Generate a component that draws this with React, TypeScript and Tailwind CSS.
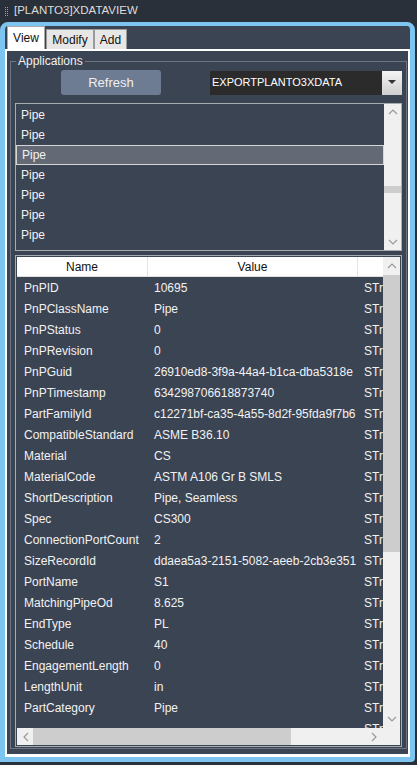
import React from "react";

const rows: [string, string][] = [
  ["PnPID", "10695"],
  ["PnPClassName", "Pipe"],
  ["PnPStatus", "0"],
  ["PnPRevision", "0"],
  ["PnPGuid", "26910ed8-3f9a-44a4-b1ca-dba5318e"],
  ["PnPTimestamp", "634298706618873740"],
  ["PartFamilyId", "c12271bf-ca35-4a55-8d2f-95fda9f7b6"],
  ["CompatibleStandard", "ASME B36.10"],
  ["Material", "CS"],
  ["MaterialCode", "ASTM A106 Gr B SMLS"],
  ["ShortDescription", "Pipe, Seamless"],
  ["Spec", "CS300"],
  ["ConnectionPortCount", "2"],
  ["SizeRecordId", "ddaea5a3-2151-5082-aeeb-2cb3e351"],
  ["PortName", "S1"],
  ["MatchingPipeOd", "8.625"],
  ["EndType", "PL"],
  ["Schedule", "40"],
  ["EngagementLength", "0"],
  ["LengthUnit", "in"],
  ["PartCategory", "Pipe"],
  ["", ""],
];

const Chevron = ({ dir }: { dir: "up" | "down" | "left" | "right" }) => {
  const pts = {
    up: "1,6 5,2 9,6",
    down: "1,2 5,6 9,2",
    left: "6,1 2,5 6,9",
    right: "2,1 6,5 2,9",
  }[dir];
  const vert = dir === "up" || dir === "down";
  return (
    <svg
      width={vert ? 10 : 8}
      height={vert ? 8 : 10}
      viewBox={vert ? "0 0 10 8" : "0 0 8 10"}
    >
      <polyline points={pts} fill="none" stroke="#9a9a9a" strokeWidth="1.2" />
    </svg>
  );
};

export default function App() {
  return (
    <div
      className="w-[417px] h-[765px] bg-[#2a303a] flex flex-col overflow-hidden text-[11px] text-[#f2f2f2]"
      style={{ fontFamily: '"Liberation Sans", Arial, sans-serif' }}
    >
      {/* title bar */}
      <div className="h-[22px] flex items-center pl-[5px] gap-[6px] shrink-0">
        <div className="grid grid-cols-2 gap-x-[1px] gap-y-[1px]">
          {Array.from({ length: 10 }).map((_, i) => (
            <div key={i} className="w-[1px] h-[1px] bg-[#9aa0a8]" />
          ))}
        </div>
        <span className="text-[11.5px] text-[#dcdcdc]">[PLANTO3]XDATAVIEW</span>
      </div>

      {/* blue frame */}
      <div className="w-[415px] h-[740px] shrink-0 border-[#7dc4f0] border-x-[5px] border-t-[4px] border-b-[5px] rounded-t-[8px] rounded-br-[4px] bg-[#3b4452] flex flex-col overflow-hidden">
        {/* tabs */}
        <div className="h-[23px] flex items-end pl-[2px] shrink-0">
          <div className="h-[23px] w-[38px] bg-white text-[#111] text-[12px] flex items-center justify-center border border-[#aaa] border-b-0">
            View
          </div>
          <div className="h-[20px] w-[48px] bg-[#e6e6e6] text-[#111] text-[12px] flex items-center justify-center border border-[#9a9a9a] border-b-0 ml-[1px]">
            Modify
          </div>
          <div className="h-[20px] w-[33px] bg-[#e6e6e6] text-[#111] text-[12px] flex items-center justify-center border border-[#9a9a9a] border-b-0">
            Add
          </div>
        </div>

        {/* tab panel */}
        <div className="flex-1 min-h-0 border-white border-x-[2px] border-t-[2px] border-b-[3px] pl-[3px] pr-[1px] pt-[10px] pb-[5px] flex flex-col">
          {/* group box */}
          <div className="relative flex-1 min-h-0 border border-[#6d7583] flex flex-col px-[4px] pt-[8px] pb-[1px]">
            <span className="absolute left-[5px] top-[-8px] bg-[#3b4452] px-[2px] text-[12px] text-[#f0f0f0] leading-[14px]">
              Applications
            </span>

            {/* controls row */}
            <div className="h-[25px] flex items-center shrink-0">
              <div className="ml-[46px] w-[100px] h-[25px] rounded-[3px] bg-[#6d7b93] flex items-center justify-center text-[13px] text-[#f0f0f0]">
                Refresh
              </div>
              <div className="ml-[49px] flex-1 h-[24px] bg-[#2b2b2b] flex items-center">
                <span className="pl-[2px] flex-1 text-[11px] text-white">
                  EXPORTPLANTO3XDATA
                </span>
                <div className="w-[20px] h-[24px] bg-gradient-to-b from-[#f4f4f4] to-[#cfcfcf] flex items-center justify-center">
                  <svg width="8" height="5" viewBox="0 0 8 5">
                    <polygon points="0,0 8,0 4,4" fill="#333" />
                  </svg>
                </div>
              </div>
            </div>

            {/* list box */}
            <div className="mt-[8px] h-[148px] border border-[#a8acb2] flex shrink-0">
              <div className="flex-1 pt-[1px] flex flex-col">
                {Array.from({ length: 7 }).map((_, i) => (
                  <div
                    key={i}
                    className={`h-[20px] flex items-center pl-[5px] text-[12px] ${
                      i === 2
                        ? "bg-[#646a75] border border-[#d6d6d6] pl-[4px]"
                        : ""
                    }`}
                  >
                    Pipe
                  </div>
                ))}
              </div>
              <div className="w-[17px] bg-[#f0f0f0] flex flex-col items-center justify-between py-[4px] relative">
                <Chevron dir="up" />
                <div className="absolute left-0 right-0 top-[82px] h-[7px] bg-[#cdcdcd]" />
                <Chevron dir="down" />
              </div>
            </div>

            {/* grid */}
            <div className="mt-[4px] flex-1 min-h-0 border border-[#a8acb2] p-[1px] flex flex-col">
              <div className="flex-1 flex min-h-0">
                <div className="flex-1 flex flex-col overflow-hidden">
                  <div className="h-[20px] bg-white flex text-[#111] text-[12px] shrink-0 border-b border-[#e0e0e0]">
                    <div className="w-[131px] shrink-0 flex items-center justify-center border-r border-[#e4e4e4]">
                      Name
                    </div>
                    <div className="w-[210px] shrink-0 flex items-center justify-center border-r border-[#e4e4e4]">
                      Value
                    </div>
                    <div className="flex-1" />
                  </div>
                  <div className="flex-1 min-h-0 overflow-hidden">
                    {rows.map(([n, v], i) => (
                      <div key={i} className="h-[21px] flex items-center text-[12px]">
                        <div className="w-[131px] shrink-0 pl-[7px] whitespace-nowrap overflow-hidden">
                          {n}
                        </div>
                        <div className="w-[210px] shrink-0 pl-[6px] whitespace-nowrap overflow-hidden">
                          {v}
                        </div>
                        <div className="flex-1 pl-[6px] whitespace-nowrap overflow-hidden">
                          STr
                        </div>
                      </div>
                    ))}
                  </div>
                </div>
                <div className="w-[17px] bg-[#f0f0f0] flex flex-col items-center justify-between py-[5px] relative">
                  <Chevron dir="up" />
                  <div className="absolute left-0 right-0 top-[18px] h-[277px] bg-[#cdcdcd]" />
                  <Chevron dir="down" />
                </div>
              </div>
              <div className="h-[17px] flex shrink-0">
                <div className="flex-1 bg-[#f0f0f0] flex items-center justify-between px-[5px] relative">
                  <Chevron dir="left" />
                  <div className="absolute top-0 bottom-0 left-[16px] w-[258px] bg-[#cdcdcd]" />
                  <Chevron dir="right" />
                </div>
                <div className="w-[17px] bg-[#f0f0f0]" />
              </div>
            </div>
          </div>
        </div>
      </div>
    </div>
  );
}
